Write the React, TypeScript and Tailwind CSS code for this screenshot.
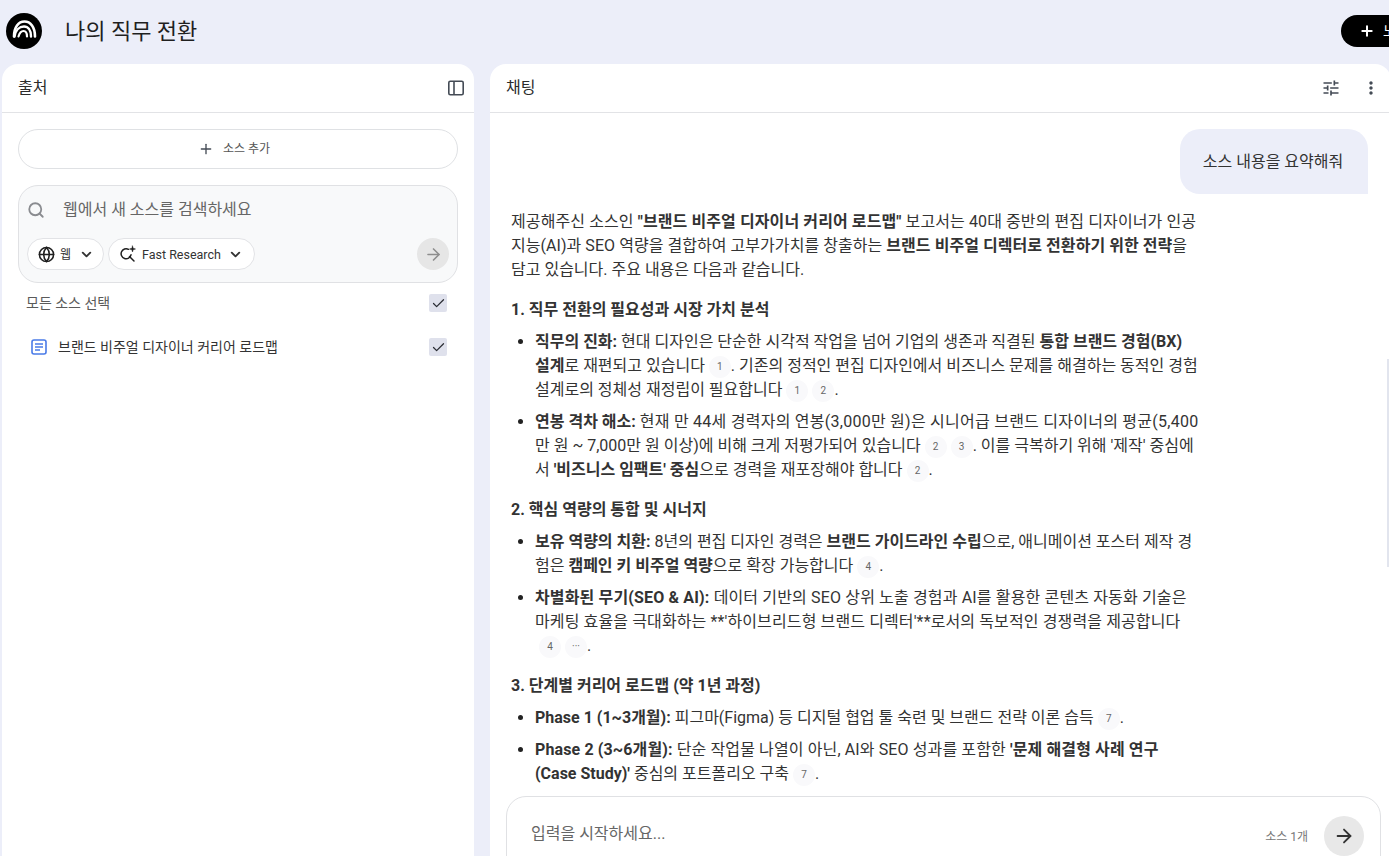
import { ArrowRight, Check, ChevronDown, Globe, Plus, Search } from 'lucide-react';
import type { ReactNode } from 'react';

const FONT = "font-['Roboto','Noto_Sans_CJK_KR',sans-serif]";

const Cite = ({ n }: { n: string }) => (
  <span className="inline-flex h-[22px] w-[22px] items-center justify-center rounded-full bg-[#f9f9fb] align-middle text-[10px] leading-none text-[#666]">
    {n}
  </span>
);

const Bullet = ({ children }: { children: ReactNode }) => (
  <li className="mb-2 list-disc marker:text-[#222]">{children}</li>
);

const CheckBox = () => (
  <span className="flex h-[18px] w-[18px] items-center justify-center rounded-[2px] bg-[#dfe1ec]">
    <Check size={15} strokeWidth={2} className="text-[#2a2d34]" />
  </span>
);

const Logo = () => (
  <svg width="36" height="36" viewBox="0 0 36 36">
    <circle cx="18" cy="18" r="18" fill="#000" />
    <g fill="none" stroke="#fff" strokeLinecap="round">
      <path strokeWidth="2.600" d="M8 23.500C8 14 12.500 8.500 18.500 8.500C24.500 8.500 29 14 29 23.500" />
      <path strokeWidth="2.400" d="M8.500 23.500C9.500 17 13.500 13.500 18 13.500C22 13.500 25 17 25 23.500" />
      <path strokeWidth="2.200" d="M12.500 23.500C13.500 20 15.500 18 17.500 18C19.500 18 21 20 21 23.500" />
    </g>
  </svg>
);

export default function App() {
  return (
    <div className={`flex h-screen flex-col overflow-hidden bg-[#eceef9] ${FONT}`}>
      {/* top bar */}
      <header className="flex h-[64px] shrink-0 items-center pb-[2px] pl-[6px]">
        <Logo />
        <h1 className="ml-[23px] text-[22px] text-[#1f1f1f]">나의 직무 전환</h1>
        <button className="ml-auto mr-[-60px] flex h-[32px] w-[108px] items-center gap-2 rounded-full bg-black pl-[18px] text-sm text-white">
          <Plus size={16} strokeWidth={3} />
          <span>노트</span>
        </button>
      </header>

      <main className="flex min-h-0 flex-1 gap-[16px] pl-[2px]">
        {/* sources */}
        <section className="flex w-[472px] shrink-0 flex-col rounded-t-[16px] bg-white">
          <div className="flex h-[49px] shrink-0 items-center justify-between border-b border-[#e2e3e6] pl-[16px] pr-[9px]">
            <span className="text-[16px] text-[#2b2b2b]">출처</span>
            <svg width="18" height="18" viewBox="0 0 18 18" fill="none" stroke="#444b55" strokeWidth="1.6">
              <rect x="1.800" y="2.300" width="14.400" height="13.400" rx="1.500" />
              <path d="M7 2.300v13.400" />
            </svg>
          </div>
          <div className="px-[16px] pt-[16px]">
            <button className="flex h-[40px] w-full items-center justify-center gap-[9px] rounded-full border border-[#dfe1e4] pr-[8px] text-[12px] text-[#555]">
              <Plus size={16} className="text-[#444b55]" />
              <span>소스 추가</span>
            </button>
            <div className="mt-[16px] h-[98px] rounded-[20px] border border-[#e0e1e4] bg-[#f8f9fa] px-[8px] pt-[9px]">
              <div className="flex h-[30px] items-center">
                <Search size={18} strokeWidth={2.400} className="text-[#8a8c90]" />
                <span className="ml-[18px] text-[16px] text-[#666]">웹에서 새 소스를 검색하세요</span>
              </div>
              <div className="mt-[13px] flex items-center">
                <button className="flex h-[32px] w-[77px] items-center rounded-full border border-[#e2e3e6] bg-white pl-[10px] text-[12px] text-[#333]">
                  <Globe size={17} strokeWidth={2.200} className="text-[#1f1f1f]" />
                  <span className="ml-[5px] pt-[2px]">웹</span>
                  <ChevronDown size={15} strokeWidth={3} className="ml-[8px] text-[#333]" />
                </button>
                <button className="ml-[4px] flex h-[32px] w-[147px] items-center rounded-full border border-[#e2e3e6] bg-white pl-[10px] text-[12.500px] text-[#333]">
                  <svg width="18" height="18" viewBox="0 0 18 18" fill="none" stroke="#1f1f1f" strokeWidth="1.500" strokeLinecap="round">
                    <path d="M9.500 4.300A5 5 0 1 0 12 9.800" />
                    <path d="M10.500 11.500l4.500 4.500" />
                    <path d="M13.500 1l.7 2.300 2.300.7-2.300.7-.7 2.300-.7-2.300-2.300-.7 2.300-.7z" fill="#1f1f1f" strokeWidth="0.500" />
                  </svg>
                  <span className="ml-[5px] pt-[2px]">Fast Research</span>
                  <ChevronDown size={15} strokeWidth={3} className="ml-[7px] text-[#333]" />
                </button>
                <span className="ml-auto flex h-[32px] w-[32px] items-center justify-center rounded-full bg-[#e6e6e6]">
                  <ArrowRight size={19} className="text-[#8e8e8e]" />
                </span>
              </div>
            </div>
            <div className="mt-[10px] flex h-[20px] items-center justify-between pl-[8px] pr-[11px]">
              <span className="text-[14px] text-[#5a5a5a]">모든 소스 선택</span>
              <CheckBox />
            </div>
            <div className="mt-[24px] flex h-[20px] items-center pl-[13px] pr-[11px]">
              <svg width="16" height="16" viewBox="0 0 16 16" fill="none" stroke="#4a7be8" strokeWidth="1.600">
                <rect x="1" y="1" width="14" height="14" rx="2" />
                <path d="M4 5h8M4 8h8M4 11h5" />
              </svg>
              <span className="ml-[11px] text-[14px] text-[#333]">브랜드 비주얼 디자이너 커리어 로드맵</span>
              <span className="ml-auto"><CheckBox /></span>
            </div>
          </div>
        </section>

        {/* chat */}
        <section className="relative flex w-[901px] shrink-0 flex-col rounded-t-[16px] bg-white">
          <span className="absolute right-[2px] top-[295px] h-[208px] w-[2px] bg-[#e2e5ee]" />
          <div className="flex h-[49px] shrink-0 items-center justify-between border-b border-[#e2e3e6] pl-[16px] pr-[10px]">
            <span className="text-[16px] text-[#2b2b2b]">채팅</span>
            <div className="flex items-center gap-[20px]">
              <svg width="20" height="20" viewBox="0 0 24 24" fill="#444b55">
                <path d="M3 17v2h6v-2H3zM3 5v2h10V5H3zm10 16v-2h8v-2h-8v-2h-2v6h2zM7 9v2H3v2h4v2h2V9H7zm14 4v-2H11v2h10zm-6-4h2V7h4V5h-4V3h-2v6z" />
              </svg>
              <svg width="20" height="20" viewBox="0 0 24 24" fill="#444b55">
                <path d="M12 8c1.100 0 2-.9 2-2s-.9-2-2-2-2 .9-2 2 .9 2 2 2zm0 2c-1.100 0-2 .9-2 2s.9 2 2 2 2-.9 2-2-.9-2-2-2zm0 6c-1.100 0-2 .9-2 2s.9 2 2 2 2-.9 2-2-.9-2-2-2z" />
              </svg>
            </div>
          </div>
          <div className="min-h-0 flex-1 overflow-hidden pl-[21px] pr-[23px] pt-[16px]">
            <div className="flex justify-end">
              <div className="flex h-[65px] w-[188px] items-center justify-center rounded-[20px] rounded-br-none bg-[#eceef9] pr-[2px] text-[16px] text-[#333]">
                소스 내용을 요약해줘
              </div>
            </div>
            <div className="mt-[16px] whitespace-nowrap text-[16px] leading-[24px] text-[#333]">
              <p>
                <span className="tracking-[0.1px]">제공해주신 소스인 <b>"브랜드 비주얼 디자이너 커리어 로드맵"</b> 보고서는 40대 중반의 편집 디자이너가 인공</span><br />
                <span className="tracking-[0.05px]">지능(AI)과 SEO 역량을 결합하여 고부가가치를 창출하는 <b>브랜드 비주얼 디렉터로 전환하기 위한 전략</b>을</span><br />
                담고 있습니다. 주요 내용은 다음과 같습니다.
              </p>
              <h3 className="mb-[8px] mt-[16px] font-bold">1. 직무 전환의 필요성과 시장 가치 분석</h3>
              <ul className="pl-[24px]">
                <Bullet>
                  <b>직무의 진화:</b> 현대 디자인은 단순한 시각적 작업을 넘어 기업의 생존과 직결된 <b>통합 브랜드 경험(BX)<br />설계</b>로 재편되고 있습니다 <Cite n="1" />. 기존의 정적인 편집 디자인에서 비즈니스 문제를 해결하는 동적인 경험<br />
                  설계로의 정체성 재정립이 필요합니다 <Cite n="1" /> <Cite n="2" />.
                </Bullet>
                <Bullet>
                  <b>연봉 격차 해소:</b> <span className="tracking-[0.25px]">현재 만 44세 경력자의 연봉(3,000만 원)은 시니어급 브랜드 디자이너의 평균(5,400</span><br />
                  만 원 ~ 7,000만 원 이상)에 비해 크게 저평가되어 있습니다 <Cite n="2" /> <Cite n="3" />. 이를 극복하기 위해 '제작' 중심에<br />
                  서 <b>'비즈니스 임팩트' 중심</b>으로 경력을 재포장해야 합니다 <Cite n="2" />.
                </Bullet>
              </ul>
              <h3 className="mb-[8px] mt-[16px] font-bold">2. 핵심 역량의 통합 및 시너지</h3>
              <ul className="pl-[24px]">
                <Bullet>
                  <b>보유 역량의 치환:</b> 8년의 편집 디자인 경력은 <b>브랜드 가이드라인 수립</b>으로, 애니메이션 포스터 제작 경<br />
                  험은 <b>캠페인 키 비주얼 역량</b>으로 확장 가능합니다 <Cite n="4" />.
                </Bullet>
                <Bullet>
                  <span className="tracking-[0.15px]"><b>차별화된 무기(SEO &amp; AI):</b> 데이터 기반의 SEO 상위 노출 경험과 AI를 활용한 콘텐츠 자동화 기술은</span><br />
                  <span className="tracking-[0.12px]">마케팅 효율을 극대화하는 **'하이브리드형 브랜드 디렉터'**로서의 독보적인 경쟁력을 제공합니다</span><br />
                  <span className="ml-[4px]"><Cite n="4" /></span> <Cite n="···" />.
                </Bullet>
              </ul>
              <h3 className="mb-[8px] mt-[16px] font-bold">3. 단계별 커리어 로드맵 (약 1년 과정)</h3>
              <ul className="pl-[24px]">
                <Bullet>
                  <b>Phase 1 (1~3개월):</b> 피그마(Figma) 등 디지털 협업 툴 숙련 및 브랜드 전략 이론 습득 <Cite n="7" />.
                </Bullet>
                <Bullet>
                  <span className="tracking-[0.12px]"><b>Phase 2 (3~6개월):</b> 단순 작업물 나열이 아닌, AI와 SEO 성과를 포함한 <b>'문제 해결형 사례 연구</b></span><br /><b>(Case Study)'</b> 중심의 포트폴리오 구축 <Cite n="7" />.
                </Bullet>
              </ul>
            </div>
          </div>
          {/* composer */}
          <div className="h-[60px] shrink-0 pl-[16px]">
            <div className="flex h-[80px] w-[875px] items-start rounded-t-[20px] border border-[#e0e1e4] bg-white pl-[24px] pr-[16px] pt-[19px]">
              <span className="mt-[6px] text-[16px] text-[#666]">입력을 시작하세요...</span>
              <span className="ml-auto mt-[12px] text-[12px] text-[#777]">소스 1개</span>
              <span className="ml-[16px] flex h-[40px] w-[40px] items-center justify-center rounded-full bg-[#e8e8e8]">
                <ArrowRight size={22} className="text-[#333]" />
              </span>
            </div>
          </div>
        </section>
      </main>
    </div>
  );
}
